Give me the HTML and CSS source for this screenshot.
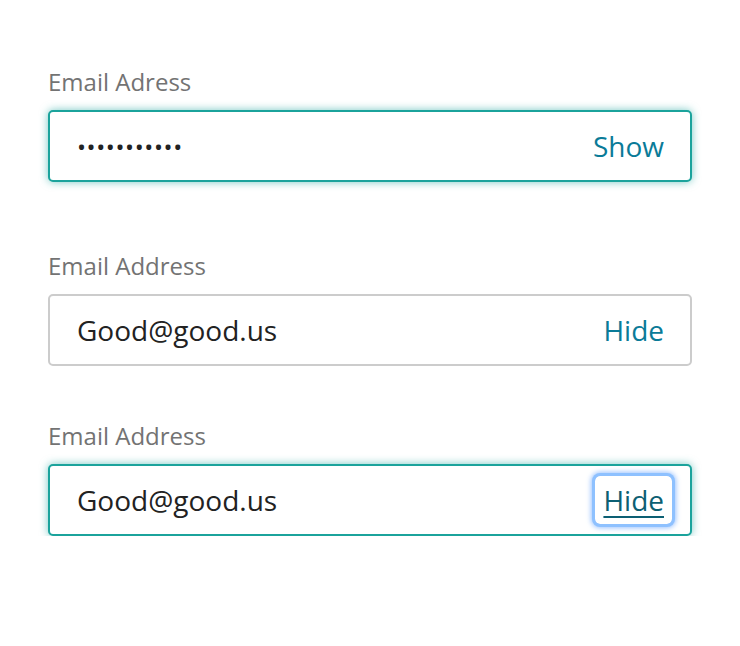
FILE: index.html
```
<!DOCTYPE html>
<html lang="en">
<head>
<meta charset="utf-8">
<link rel="stylesheet" href="styles.css">
</head>
<body>
<div class="form">
  <div class="field field-first">
    <label class="label">Email Adress</label>
    <div class="box box-focus">
      <span class="value value-dots">•••••••••••</span>
      <a class="toggle" href="#">Show</a>
    </div>
  </div>
  <div class="field field-second">
    <label class="label">Email Address</label>
    <div class="box">
      <span class="value">Good@good.us</span>
      <a class="toggle" href="#">Hide</a>
    </div>
  </div>
  <div class="field field-third">
    <label class="label">Email Address</label>
    <div class="box box-focus">
      <span class="value">Good@good.us</span>
      <a class="toggle toggle-focus" href="#">Hide</a>
    </div>
  </div>
</div>
</body>
</html>
```
FILE: styles.css
```
html, body {
  margin: 0;
  padding: 0;
  background: #ffffff;
}
body {
  font-family: "Open Sans", "Liberation Sans", sans-serif;
}
.form {
  padding: 0 48px;
  display: flex;
  flex-direction: column;
}
.field {
  display: flex;
  flex-direction: column;
}
.field-first { margin-top: 66px; }
.field-second { margin-top: 68px; }
.field-third { margin-top: 54px; }
.label {
  font-size: 24px;
  line-height: 32px;
  color: #737373;
  margin-bottom: 12px;
}
.box {
  height: 72px;
  box-sizing: border-box;
  border: 2px solid #cccccc;
  border-radius: 5px;
  display: flex;
  align-items: center;
  justify-content: space-between;
  padding: 0 18px 0 27px;
  background: #fff;
}
.box-focus {
  border-color: #1ba39c;
  box-shadow: 0 0 8px rgba(27, 163, 156, 0.6);
}
.value {
  font-size: 28px;
  color: #222222;
}
.value-dots {
  font-size: 24px;
  letter-spacing: 0.6px;
  color: #222;
}
.toggle {
  font-size: 28px;
  color: #0a7b98;
  text-decoration: none;
  padding: 5px 8px;
  border-radius: 5px;
}
.toggle-focus {
  color: #0c5f73;
  text-decoration: underline;
  text-underline-offset: 5px;
  box-shadow: 0 0 0 3px #8ec1ff, 0 0 5px 4px rgba(120, 175, 255, 0.75);
}
```
